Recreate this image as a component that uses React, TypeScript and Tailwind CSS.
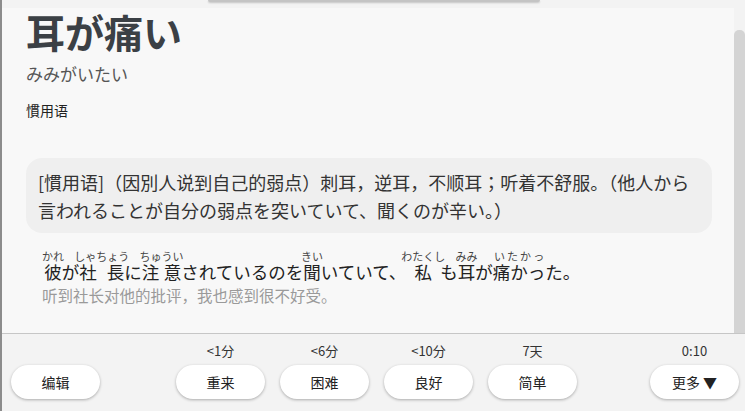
import React from "react";

const jp = { fontFamily: '"Noto Sans CJK JP", "Noto Sans", sans-serif' };

const Btn = ({ label }: { label: string }) => (
  <button className="flex h-[34px] w-[89px] items-center justify-center rounded-[17px] bg-white text-[14px] text-[#222] shadow-[0_1px_3px_rgba(0,0,0,0.3)]">
    {label}
  </button>
);

const Answer = ({ time, label }: { time: string; label: string }) => (
  <div className="flex flex-col items-center">
    <div className="mb-[5px] h-[18px] text-[13px] leading-[18px] text-[#333]">{time}</div>
    <Btn label={label} />
  </div>
);

const rt = "text-[11px] text-[#444]";

const App = () => {
  return (
    <div className="flex h-[411px] w-[745px] overflow-hidden bg-[#f3f3f3]" style={jp}>
      <div className="w-[2px] bg-[#8c8c8c]" />
      <div className="flex flex-1 flex-col">
        {/* strip above the card */}
        <div className="h-[8px]">
          <div className="ml-[206px] h-[2px] w-[332px] rounded-b-md bg-[#c4c4c4] shadow-[0_1px_2px_rgba(0,0,0,0.2)]" />
        </div>

        <div className="flex h-[325px]">
          <div className="flex-1 bg-[#f8f8f8] pl-[24px] pr-[22px] pt-[2px]">
            <h1 className="text-[39px] font-bold leading-[42px] text-[#3b4045]">耳が痛い</h1>
            <div className="mt-[10px] text-[17px] leading-[24px] text-[#555]">みみがいたい</div>
            <div className="mt-[14px] text-[14px] font-normal leading-[20px] text-[#222]">慣用语</div>

            <div className="mt-[38px] rounded-[16px] bg-[#efefef] pb-[9px] pl-[12px] pr-[12px] pt-[10px] text-[18px] leading-[28px] text-[#333]">
              [慣用语]（因別人说到自己的弱点）刺耳，逆耳，不顺耳；听着不舒服。（他人から言われることが自分の弱点を突いていて、聞くのが辛い。）
            </div>

            <div className="mt-[18px] pl-[16px] text-[17.5px] leading-[26px] text-[#222]">
              <ruby>彼<rt className={rt}>かれ</rt></ruby>が
              <ruby>社長<rt className={rt}>しゃちょう</rt></ruby>に
              <ruby>注意<rt className={rt}>ちゅうい</rt></ruby>されているのを
              <ruby>聞<rt className={rt}>きい</rt></ruby>いていて、
              <ruby>私<rt className={rt}>わたくし</rt></ruby>も
              <ruby>耳<rt className={rt}>みみ</rt></ruby>が
              <ruby>痛かっ<rt className={rt}>いたかっ</rt></ruby>た。
            </div>
            <div className="pl-[16px] text-[15.5px] leading-[20px] text-[#9a9a9a]" style={{ fontFamily: '"Noto Sans CJK SC", sans-serif' }}>
              听到社长对他的批评，我也感到很不好受。
            </div>
          </div>
          <div className="w-[11px] pt-[22px]">
            <div className="h-full rounded-t-[5px] bg-[#d4d4d4]" />
          </div>
        </div>

        <div className="flex flex-1 items-end border-t border-[#c6c6c6] pb-[12px] pl-[9px] pr-[6px]">
          <Btn label="编辑" />
          <div className="ml-[76px] flex gap-[15px]">
            <Answer time="<1分" label="重来" />
            <Answer time="<6分" label="困难" />
            <Answer time="<10分" label="良好" />
            <Answer time="7天" label="简单" />
          </div>
          <div className="flex-1" />
          <Answer time="0:10" label="更多 ▼" />
        </div>
      </div>
    </div>
  );
};

export default App;
